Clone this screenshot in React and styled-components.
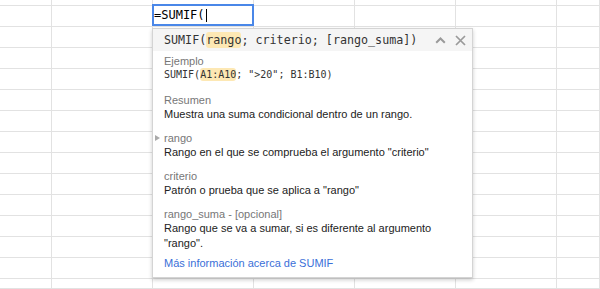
import styled, { createGlobalStyle } from "styled-components";

const GlobalStyle = createGlobalStyle`
  html, body {
    margin: 0;
    height: 100%;
    background: #fff;
    overflow: hidden;
  }
  body {
    font-family: "Liberation Sans", Arial, sans-serif;
  }
`

const COLS = 7
const ROWS = 15

const App = () => {
    const cells = []
    for (let r = 0; r < ROWS; r++) {
        for (let c = 0; c < COLS; c++) {
            cells.push(<Cell key={r + "-" + c} />)
        }
    }
    return (
        <Sheet>
            <GlobalStyle />
            <Grid>{cells}</Grid>
            <Editor>
                =SUMIF(<Caret />
            </Editor>
            <Popup>
                <Header>
                    <Signature>
                        SUMIF(<Hl>rango</Hl>; criterio; [rango_suma])
                    </Signature>
                    <HeaderIcons>
                        <svg width="11" height="8" viewBox="0 0 11 8">
                            <path d="M1.2 6.8 L5.5 2.5 L9.8 6.8" stroke="#9a9a9a" strokeWidth="2" fill="none" />
                        </svg>
                        <svg width="11" height="11" viewBox="0 0 11 11">
                            <path d="M1 1 L10 10 M10 1 L1 10" stroke="#9a9a9a" strokeWidth="1.7" fill="none" />
                        </svg>
                    </HeaderIcons>
                </Header>
                <Body>
                    <Section $gap={13}>
                        <Label>Ejemplo</Label>
                        <Code>SUMIF(<Hl>A1:A10</Hl>; "&gt;20"; B1:B10)</Code>
                    </Section>
                    <Section>
                        <Label>Resumen</Label>
                        <Desc>Muestra una suma condicional dentro de un rango.</Desc>
                    </Section>
                    <Section>
                        <Label $active>rango</Label>
                        <Desc>Rango en el que se comprueba el argumento "criterio"</Desc>
                    </Section>
                    <Section>
                        <Label>criterio</Label>
                        <Desc>Patrón o prueba que se aplica a "rango"</Desc>
                    </Section>
                    <Section $gap={5}>
                        <Label>rango_suma - [opcional]</Label>
                        <Desc>Rango que se va a sumar, si es diferente al argumento "rango".</Desc>
                    </Section>
                    <MoreLink href="#">Más información acerca de SUMIF</MoreLink>
                </Body>
            </Popup>
        </Sheet>
    )
}

const Sheet = styled.div`
    position: relative;
    width: 600px;
    height: 289px;
    overflow: hidden;
`

const Grid = styled.div`
    display: grid;
    grid-template-columns: 52px repeat(5, 101px) 1fr;
    grid-template-rows: 6px repeat(13, 21px) 1fr;
    height: 100%;
`

const Cell = styled.div`
    box-sizing: border-box;
    border-right: 1px solid #e2e2e2;
    border-bottom: 1px solid #e2e2e2;
`

const Editor = styled.div`
    position: absolute;
    left: 152px;
    top: 4px;
    width: 102px;
    height: 22px;
    box-sizing: border-box;
    border: 2px solid #4a87e8;
    background: #fff;
    display: flex;
    align-items: center;
    font-family: "DejaVu Sans Mono", monospace;
    font-size: 12px;
    color: #000;
`

const Caret = styled.span`
    display: inline-block;
    width: 1px;
    height: 13px;
    background: #000;
    margin-left: 1px;
`

const Popup = styled.div`
    position: absolute;
    left: 152px;
    top: 28px;
    width: 321px;
    box-sizing: border-box;
    background: #fff;
    border: 1px solid #d4d4d4;
    box-shadow: 0 2px 4px rgba(0, 0, 0, 0.2);
`

const Header = styled.div`
    display: flex;
    align-items: center;
    justify-content: space-between;
    height: 22px;
    padding: 0 6px 0 11px;
    background: #f5f5f5;
`

const Signature = styled.div`
    font-family: "DejaVu Sans Mono", monospace;
    font-size: 11.7px;
    color: #333;
    white-space: nowrap;
`

const Hl = styled.span`
    background: #fde8b4;
    border-radius: 3px;
    padding: 1px 0;
`

const HeaderIcons = styled.div`
    display: flex;
    align-items: center;
    gap: 9px;
`

const Body = styled.div`
    padding: 4px 12px 7px 11px;
    display: flex;
    flex-direction: column;
`

const Section = styled.div`
    display: flex;
    flex-direction: column;
    margin-bottom: ${p => (p.$gap ?? 10)}px;
`

const Label = styled.div`
    position: relative;
    font-size: 11px;
    line-height: 13px;
    color: #777;

    ${p => p.$active && `
        &::before {
            content: "";
            position: absolute;
            left: -9px;
            top: 3px;
            border-left: 5px solid #aaa;
            border-top: 3.5px solid transparent;
            border-bottom: 3.5px solid transparent;
        }
    `}
`

const Code = styled.div`
    font-family: "DejaVu Sans Mono", monospace;
    font-size: 10px;
    line-height: 13px;
    color: #333;
`

const Desc = styled.div`
    font-size: 11px;
    line-height: 15px;
    color: #222;
    max-width: 290px;
`

const MoreLink = styled.a`
    font-size: 11px;
    line-height: 14px;
    color: #3a6fd8;
    text-decoration: none;
`

export default App
